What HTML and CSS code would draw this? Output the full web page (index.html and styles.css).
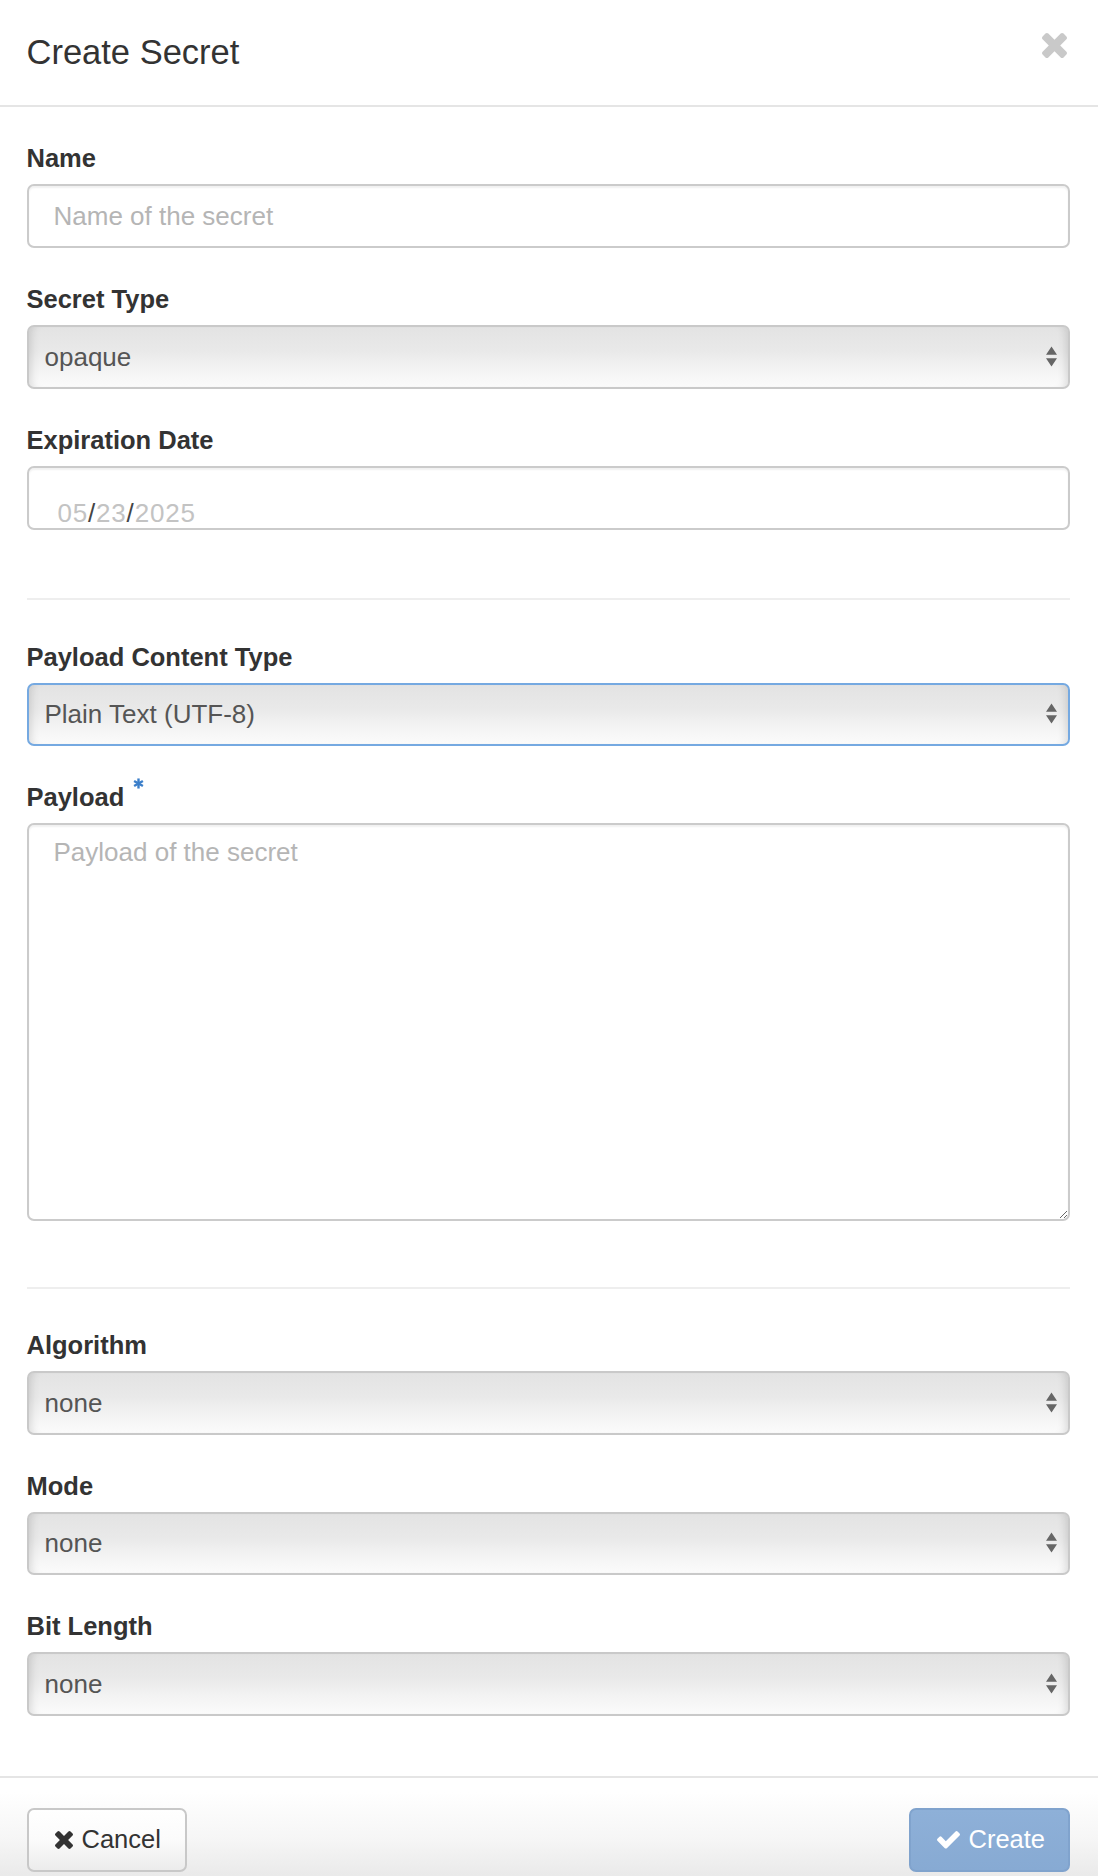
FILE: index.html
```html
<!DOCTYPE html>
<html lang="en">
<head>
<meta charset="utf-8">
<title>Create Secret</title>
<link rel="stylesheet" href="styles.css">
</head>
<body>
<div class="modal">
  <div class="modal-header">
    <h3 class="modal-title">Create Secret</h3>
    <button class="close" type="button" aria-label="Close">
      <svg class="close-icon" viewBox="110 366 1188 1188"><path d="M1298 1322q0 40-28 68l-136 136q-28 28-68 28t-68-28l-294-294-294 294q-28 28-68 28t-68-28l-136-136q-28-28-28-68t28-68l294-294-294-294q-28-28-28-68t28-68l136-136q28-28 68-28t68 28l294 294 294-294q28-28 68-28t68 28l136 136q28 28 28 68t-28 68l-294 294 294 294q28 28 28 68z"/></svg>
    </button>
  </div>
  <form class="modal-body">
    <div class="form-group">
      <label class="control-label">Name</label>
      <input class="form-control" type="text" placeholder="Name of the secret">
    </div>
    <div class="form-group">
      <label class="control-label">Secret Type</label>
      <div class="select-wrap">
        <select class="form-select"><option>opaque</option></select>
        <svg class="arrows" viewBox="0 0 12 22"><path d="M6 0 L12 9 L0 9 Z M0 13 L12 13 L6 22 Z"/></svg>
      </div>
    </div>
    <div class="form-group">
      <label class="control-label">Expiration Date</label>
      <div class="form-control date-input"><span class="dp">05</span><span class="ds">/</span><span class="dp">23</span><span class="ds">/</span><span class="dp">2025</span></div>
    </div>
    <hr class="sep sep-1">
    <div class="form-group">
      <label class="control-label">Payload Content Type</label>
      <div class="select-wrap">
        <select class="form-select focused"><option>Plain Text (UTF-8)</option></select>
        <svg class="arrows" viewBox="0 0 12 22"><path d="M6 0 L12 9 L0 9 Z M0 13 L12 13 L6 22 Z"/></svg>
      </div>
    </div>
    <div class="form-group">
      <label class="control-label">Payload<svg class="required" viewBox="0 0 12 12"><g><line x1="6" y1="0.5" x2="6" y2="11.5"/><line x1="1.2" y1="3.2" x2="10.8" y2="8.8"/><line x1="1.2" y1="8.8" x2="10.8" y2="3.2"/></g></svg></label>
      <textarea class="form-control payload" placeholder="Payload of the secret"></textarea>
    </div>
    <hr class="sep sep-2">
    <div class="form-group">
      <label class="control-label">Algorithm</label>
      <div class="select-wrap">
        <select class="form-select"><option>none</option></select>
        <svg class="arrows" viewBox="0 0 12 22"><path d="M6 0 L12 9 L0 9 Z M0 13 L12 13 L6 22 Z"/></svg>
      </div>
    </div>
    <div class="form-group">
      <label class="control-label">Mode</label>
      <div class="select-wrap">
        <select class="form-select"><option>none</option></select>
        <svg class="arrows" viewBox="0 0 12 22"><path d="M6 0 L12 9 L0 9 Z M0 13 L12 13 L6 22 Z"/></svg>
      </div>
    </div>
    <div class="form-group last">
      <label class="control-label">Bit Length</label>
      <div class="select-wrap">
        <select class="form-select"><option>none</option></select>
        <svg class="arrows" viewBox="0 0 12 22"><path d="M6 0 L12 9 L0 9 Z M0 13 L12 13 L6 22 Z"/></svg>
      </div>
    </div>
  </form>
  <div class="modal-footer">
    <button class="btn btn-default" type="button">
      <svg class="btn-icon times" viewBox="110 366 1188 1188"><path d="M1298 1322q0 40-28 68l-136 136q-28 28-68 28t-68-28l-294-294-294 294q-28 28-68 28t-68-28l-136-136q-28-28-28-68t28-68l294-294-294-294q-28-28-28-68t28-68l136-136q28-28 68-28t68 28l294 294 294-294q28-28 68-28t68 28l136 136q28 28 28 68t-28 68l-294 294 294 294q28 28 28 68z"/></svg>
      <span>Cancel</span>
    </button>
    <button class="btn btn-primary" type="button" disabled>
      <svg class="btn-icon check" viewBox="121 334 1550 1188"><path d="M1671 566q0 40-28 68l-724 724-136 136q-28 28-68 28t-68-28l-136-136-362-362q-28-28-28-68t28-68l136-136q28-28 68-28t68 28l294 295 656-657q28-28 68-28t68 28l136 136q28 28 28 68z"/></svg>
      <span>Create</span>
    </button>
  </div>
</div>
</body>
</html>
```

FILE: styles.css
```css
* { box-sizing: border-box; }

html, body {
  margin: 0;
  padding: 0;
  background: #fff;
}

body {
  font-family: "Liberation Sans", Arial, Helvetica, sans-serif;
  color: #333;
  width: 1098px;
  height: 1876px;
  overflow: hidden;
}

.modal {
  display: flex;
  flex-direction: column;
}

.modal-header {
  height: 107px;
  border-bottom: 2px solid #e5e5e5;
  padding: 0 31px 0 26.5px;
  display: flex;
  justify-content: space-between;
  align-items: center;
}

.modal-title {
  margin: 0;
  font-size: 34.5px;
  font-weight: normal;
  line-height: 40px;
  color: #333;
  padding-bottom: 2px;
}

.close {
  align-self: flex-start;
  margin-top: 33px;
  padding: 0;
  border: 0;
  background: none;
  width: 25px;
  height: 25px;
}

.close-icon {
  display: block;
  width: 25px;
  height: 25px;
  fill: #c9c9c9;
}

.modal-body {
  margin: 0;
  padding: 28px 28.5px 32.5px 26.5px;
  display: flex;
  flex-direction: column;
}

.form-group {
  margin-bottom: 28px;
  display: flex;
  flex-direction: column;
}

.control-label {
  display: block;
  font-size: 25.5px;
  font-weight: bold;
  line-height: 40px;
  padding-top: 3px;
  margin-bottom: 6px;
  color: #333;
}

.form-control {
  display: block;
  width: 100%;
  height: 64px;
  padding: 0 25px;
  font-family: inherit;
  font-size: 26px;
  color: #555;
  background: #fff;
  border: 2px solid #cbcbcb;
  border-radius: 7px;
  box-shadow: inset 0 2px 2px rgba(0, 0, 0, 0.06);
  outline: none;
}

.form-control::placeholder {
  color: #b5b5b5;
}

.date-input {
  padding: 30px 0 0 29px;
  line-height: 30px;
  overflow: hidden;
  letter-spacing: 0.8px;
}

.date-input .dp { color: #c3c3c3; }
.date-input .ds { color: #444; }

.select-wrap {
  position: relative;
}

.form-select {
  display: block;
  width: 100%;
  height: 63.5px;
  padding: 0 40px 0 16px;
  font-family: inherit;
  font-size: 26px;
  color: #555;
  -webkit-appearance: none;
  appearance: none;
  border: 2px solid #c9c9c9;
  border-radius: 7px;
  background: linear-gradient(to bottom, #e3e3e3 0%, #e9e9e9 40%, #f3f3f3 70%, #fbfbfb 100%);
  box-shadow: inset 9px 0 8px -7px rgba(0, 0, 0, 0.13), inset -9px 0 8px -7px rgba(0, 0, 0, 0.13);
  outline: none;
}

.form-select.focused {
  border-color: #75a9e1;
}

.arrows {
  position: absolute;
  right: 13px;
  top: 50%;
  width: 11px;
  height: 21px;
  margin-top: -11px;
  fill: #666;
  pointer-events: none;
}

.required {
  width: 11px;
  height: 11px;
  margin-left: 9px;
  vertical-align: 17px;
  stroke: #3b7fca;
  stroke-width: 2.6;
  stroke-linecap: butt;
}

.payload {
  height: 398px;
  padding: 9px 25px;
  line-height: 37px;
  resize: vertical;
}

.sep {
  width: 100%;
  margin: 0;
  border: 0;
  border-top: 2px solid #eee;
  height: 0;
}

.sep-1 { margin-top: 40px; margin-bottom: 34px; }
.sep-2 { margin-top: 38px; margin-bottom: 33px; }

.form-group.last { margin-bottom: 28px; }

.modal-footer {
  border-top: 2px solid #e5e5e5;
  padding: 30px 28.5px 0 26.5px;
  height: 100px;
  display: flex;
  justify-content: space-between;
  align-items: flex-start;
  background: linear-gradient(to bottom, #ffffff 0px, #ffffff 14px, #f6f6f6 60px, #e9e9e9 100px);
}

.btn {
  display: flex;
  align-items: center;
  gap: 9px;
  height: 63.5px;
  padding: 0 26px;
  font-family: inherit;
  font-size: 25.5px;
  line-height: 1;
  border-radius: 7px;
  cursor: pointer;
}

.btn-default {
  width: 160px;
  color: #333;
  border: 2px solid #c8c8c8;
  background: linear-gradient(to bottom, #ffffff 0%, #fbfbfb 50%, #ececec 100%);
}

.btn-primary {
  width: 161px;
  color: #fff;
  border: 2px solid #80a3cd;
  background: linear-gradient(to bottom, #8eb0d8 0%, #87aad3 100%);
}

.btn-icon {
  display: block;
  flex: none;
}

.btn-icon.times {
  width: 18px;
  height: 18px;
  fill: #333;
}

.btn-icon.check {
  width: 23px;
  height: 17.6px;
  fill: #fff;
}
```
